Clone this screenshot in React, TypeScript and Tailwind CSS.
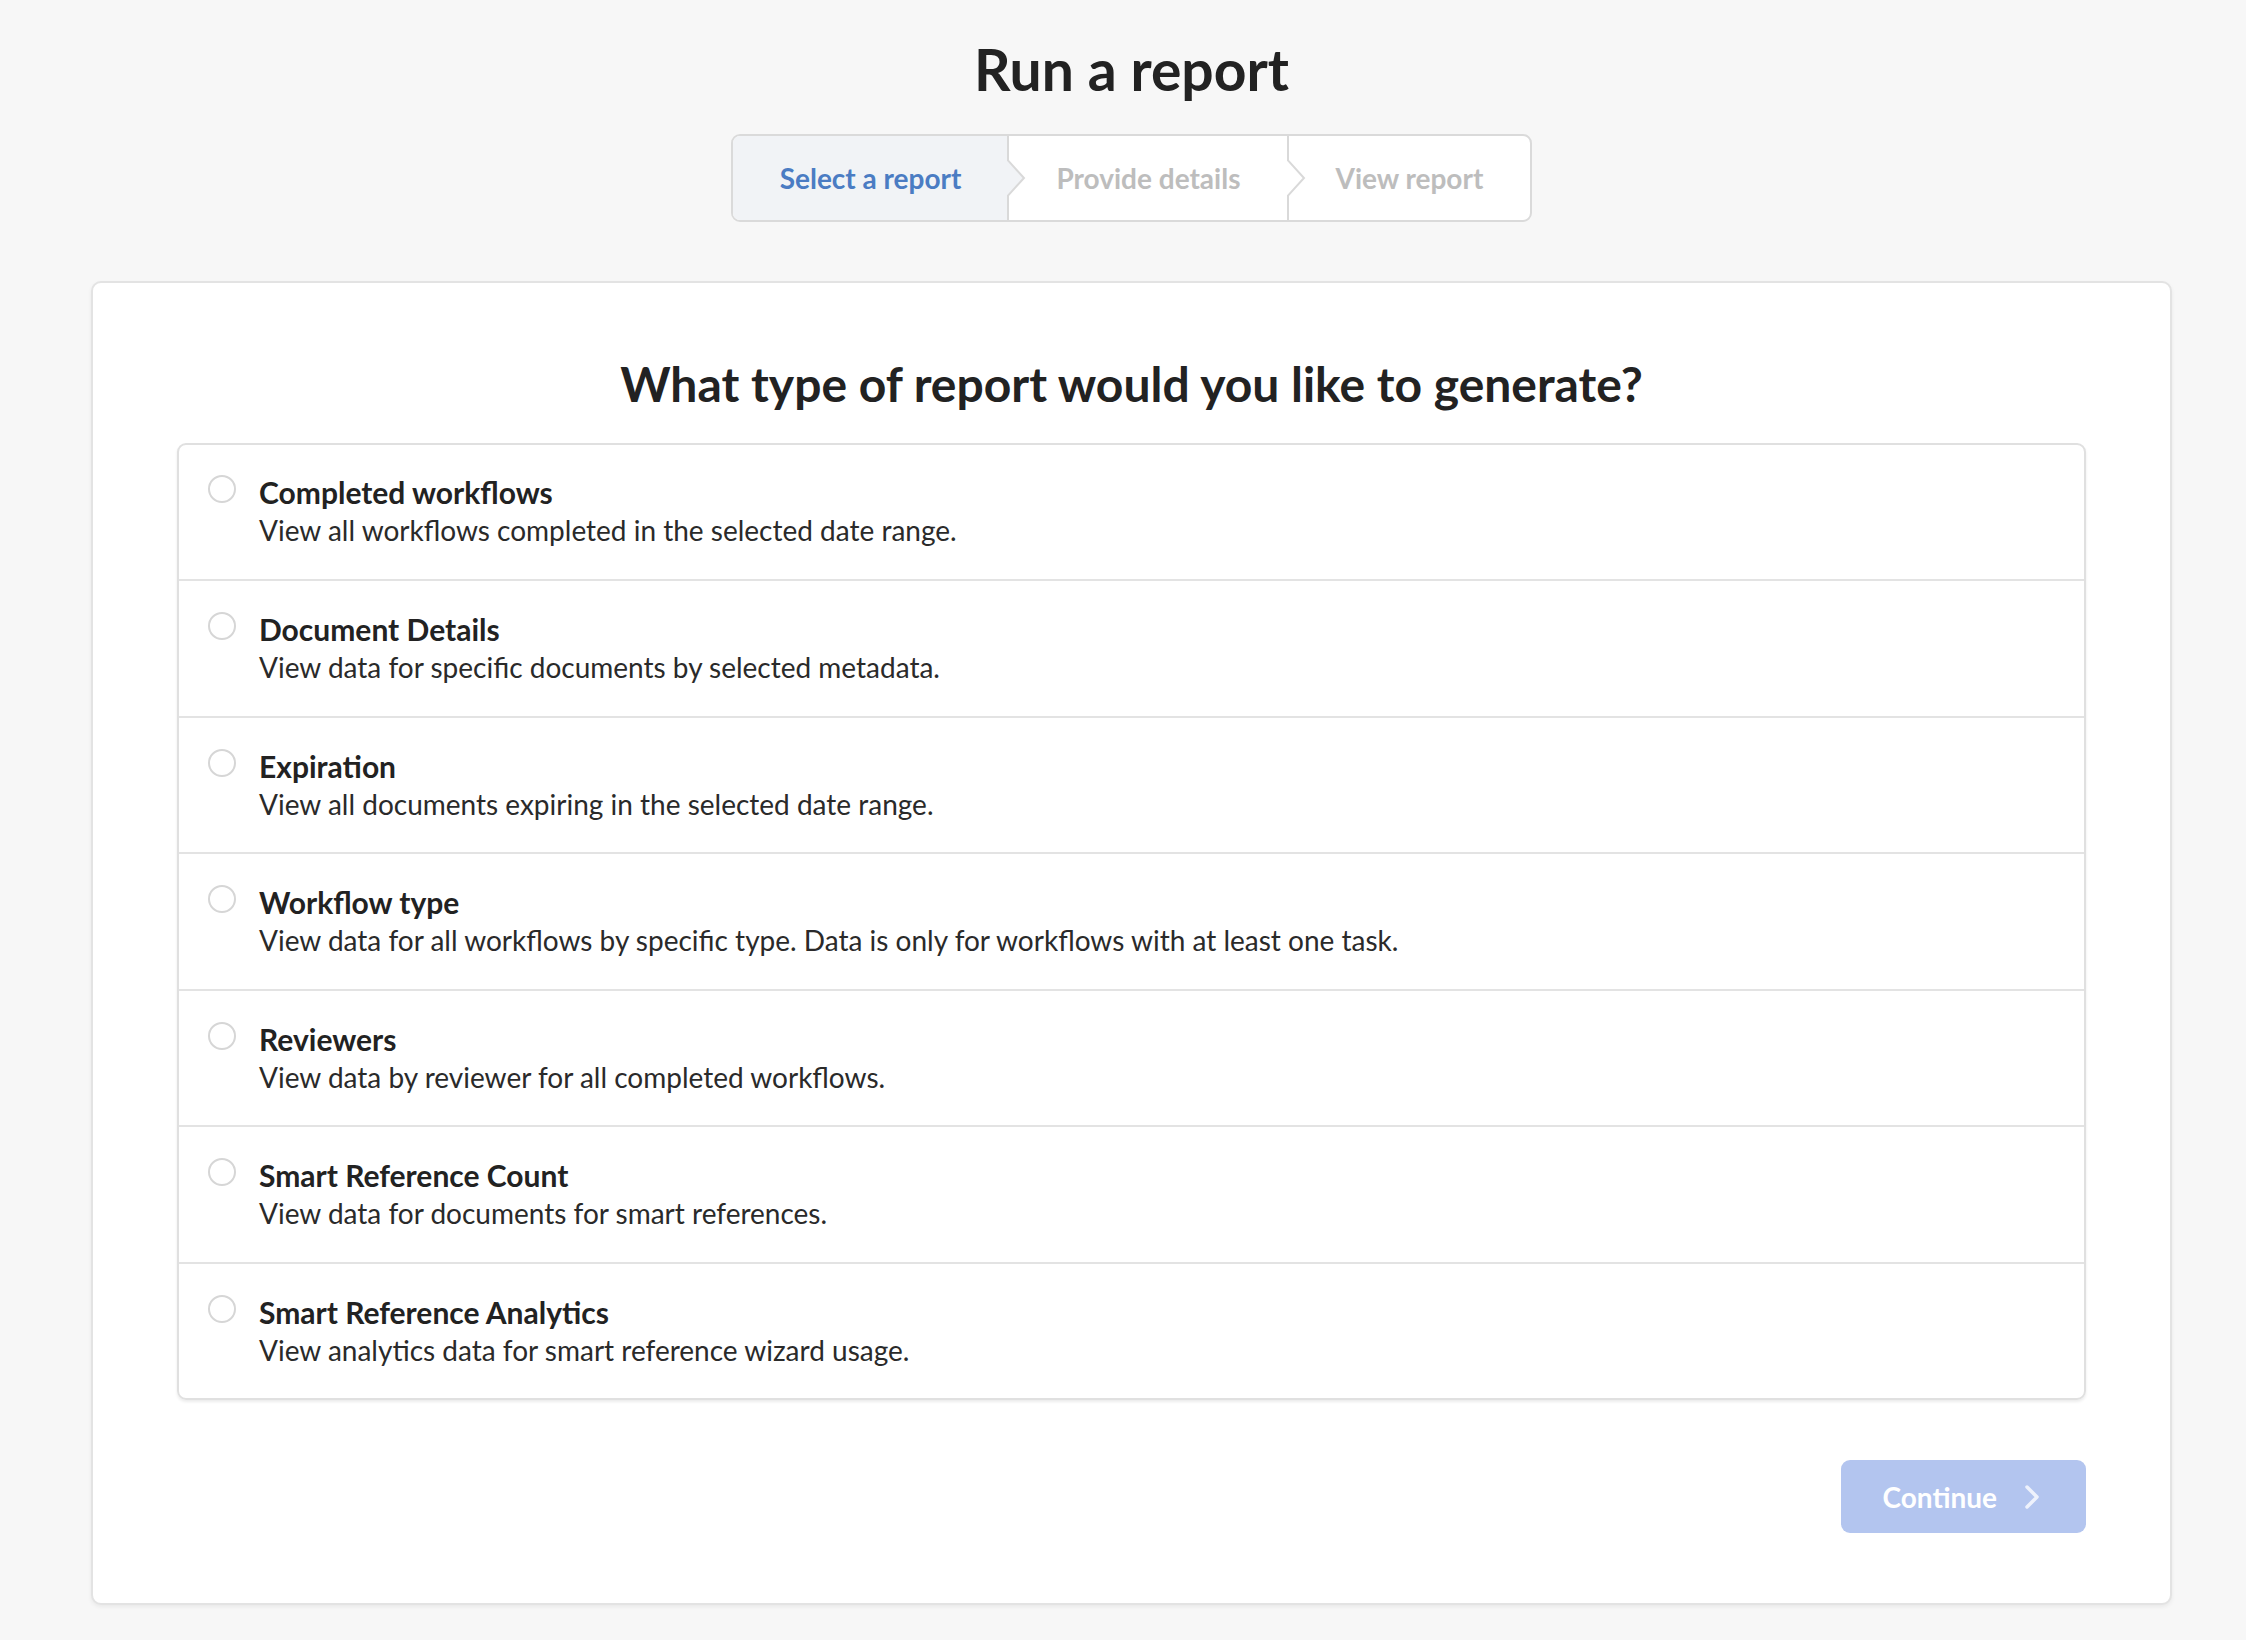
import React, { useState } from "react";

const reports = [
  {
    id: "completed",
    title: "Completed workflows",
    description: "View all workflows completed in the selected date range.",
  },
  {
    id: "document",
    title: "Document Details",
    description: "View data for specific documents by selected metadata.",
  },
  {
    id: "expiration",
    title: "Expiration",
    description: "View all documents expiring in the selected date range.",
  },
  {
    id: "workflow-type",
    title: "Workflow type",
    description:
      "View data for all workflows by specific type. Data is only for workflows with at least one task.",
  },
  {
    id: "reviewers",
    title: "Reviewers",
    description: "View data by reviewer for all completed workflows.",
  },
  {
    id: "smart-count",
    title: "Smart Reference Count",
    description: "View data for documents for smart references.",
  },
  {
    id: "smart-analytics",
    title: "Smart Reference Analytics",
    description: "View analytics data for smart reference wizard usage.",
  },
];

function StepDivider({ fill }: { fill: string }) {
  return (
    <svg
      className="absolute top-0 -left-[1px] z-10 h-full w-[20px]"
      viewBox="0 0 20 86"
      preserveAspectRatio="none"
    >
      <path d="M1 25 L17 43 L1 61 Z" fill={fill} />
      <path
        d="M1 0 V25 L17 43 L1 61 V86"
        fill="none"
        stroke="#d9d9d9"
        strokeWidth="2"
      />
    </svg>
  );
}

function Stepper() {
  return (
    <div className="flex h-[88px] overflow-hidden rounded-[9px] border-2 border-[#dadada] bg-white text-[28px] font-bold">
      <div className="flex items-center bg-[#f1f3f6] px-[47px] text-[#4b7cc3]">
        Select a report
      </div>
      <div className="relative flex items-center px-[48px] text-[#bdbdbd]">
        <StepDivider fill="#f1f3f6" />
        Provide details
      </div>
      <div className="relative flex items-center px-[47px] text-[#bdbdbd]">
        <StepDivider fill="#ffffff" />
        View report
      </div>
    </div>
  );
}

export default function App() {
  const [selected, setSelected] = useState<string | null>(null);

  return (
    <div
      className="min-h-screen bg-[#f7f7f7] pt-[34px] pr-[74px] pb-[38px] pl-[91px] text-[#222]"
      style={{ fontFamily: "Lato, 'Noto Sans', sans-serif" }}
    >
      <div className="flex flex-col items-center">
        <h1 className="text-[57px] leading-[70px] font-bold">Run a report</h1>
        <div className="mt-[30px]">
          <Stepper />
        </div>
      </div>

      <div className="mt-[59px] rounded-[10px] border-2 border-[#e3e3e3] bg-white px-[84px] pt-[71px] pb-[70px] shadow-[0_2px_4px_rgba(0,0,0,0.06)]">
        <h2 className="text-center text-[48px] leading-[60px] font-bold">
          What type of report would you like to generate?
        </h2>

        <div className="mt-[29px] overflow-hidden rounded-[9px] border-2 border-[#e0e0e0] shadow-[0_2px_3px_rgba(0,0,0,0.08)]">
          {reports.map((r, i) => (
            <label
              key={r.id}
              className={`flex cursor-pointer items-start gap-[23px] px-[29px] ${
                i > 0
                  ? "h-[136.5px] border-t-2 border-[#e3e3e3] pt-[29px]"
                  : "h-[134px] pt-[28px]"
              }`}
            >
              <input
                type="radio"
                name="report"
                className="sr-only"
                checked={selected === r.id}
                onChange={() => setSelected(r.id)}
              />
              <span
                className={`mt-[2px] flex h-[28px] w-[28px] shrink-0 items-center justify-center rounded-full border-2 bg-white ${
                  selected === r.id ? "border-[#4b7cc3]" : "border-[#d6d6d6]"
                }`}
              >
                {selected === r.id && (
                  <span className="h-[14px] w-[14px] rounded-full bg-[#4b7cc3]" />
                )}
              </span>
              <span className="flex flex-col">
                <span className="text-[30px] leading-[38px] font-bold text-[#222]">
                  {r.title}
                </span>
                <span className="text-[28px] leading-[38px] text-[#2a2a2a]">
                  {r.description}
                </span>
              </span>
            </label>
          ))}
        </div>

        <div className="mt-[60px] flex justify-end">
          <button
            type="button"
            disabled={!selected}
            className="flex h-[73px] items-center gap-[27px] rounded-[9px] bg-[#b3c5ef] pr-[46px] pl-[42px] text-[28px] font-bold text-white"
          >
            Continue
            <svg width="16" height="26" viewBox="0 0 16 26" fill="none">
              <path
                d="M3 3 L13 13 L3 23"
                stroke="#eef2fc"
                strokeWidth="3.5"
                strokeLinecap="round"
                strokeLinejoin="round"
              />
            </svg>
          </button>
        </div>
      </div>
    </div>
  );
}
